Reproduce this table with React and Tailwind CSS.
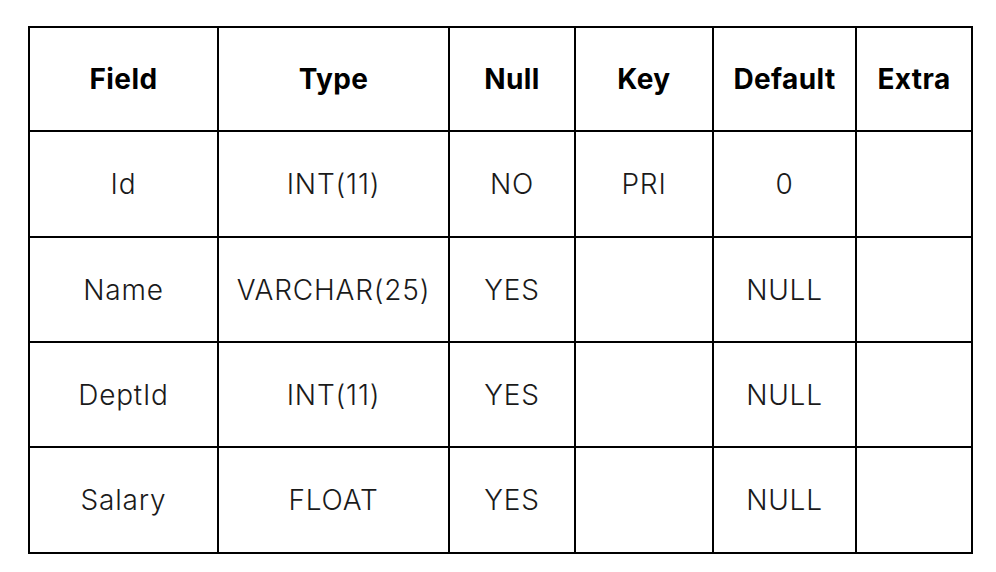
import React from "react";

const headers = ["Field", "Type", "Null", "Key", "Default", "Extra"];

const rows = [
    ["Id", "INT(11)", "NO", "PRI", "0", ""],
    ["Name", "VARCHAR(25)", "YES", "", "NULL", ""],
    ["DeptId", "INT(11)", "YES", "", "NULL", ""],
    ["Salary", "FLOAT", "YES", "", "NULL", ""],
];

function App() {
    return (
        <div className="w-[996px] h-[572px] bg-white pl-[28px] pt-[26px]">
            <div className="inline-grid grid-cols-[187px_229px_124px_136px_141px_114px] grid-rows-[102px_104px_103px_103px_104px] gap-[2px] p-[2px] bg-black">
                {headers.map((h) => (
                    <div key={h}
                         className="bg-white flex items-center justify-center font-['Inter',sans-serif] font-bold text-[28px] tracking-[0.4px] text-black">
                        {h}
                    </div>
                ))}
                {rows.map((row, i) =>
                    row.map((cell, j) => (
                        <div key={`${i}-${j}`}
                             className="bg-white flex items-center justify-center font-['Inter',sans-serif] font-light text-[28px] tracking-[0.8px] text-[#1a1a1a]">
                            {cell}
                        </div>
                    ))
                )}
            </div>
        </div>
    );
}

export default App;
